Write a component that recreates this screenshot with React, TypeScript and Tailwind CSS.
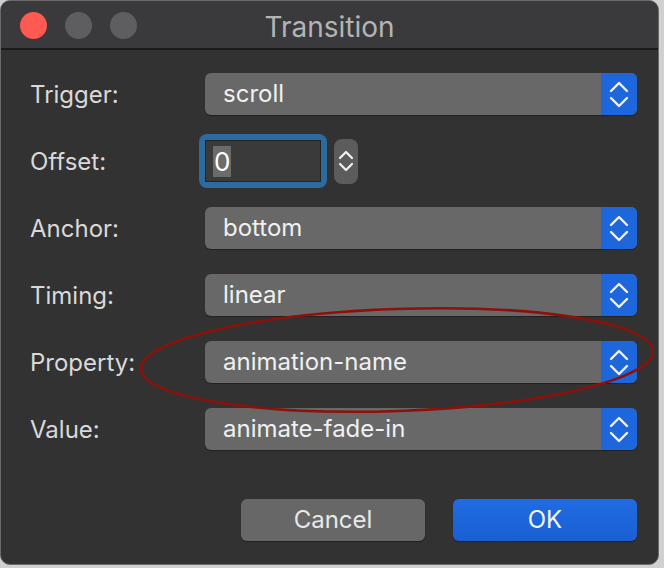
import React from "react";

const font = { fontFamily: 'Inter, "Noto Sans", sans-serif' };

const rows = [
  { label: "Trigger:", value: "scroll" },
  { label: "Offset:", value: "0", kind: "number" },
  { label: "Anchor:", value: "bottom" },
  { label: "Timing:", value: "linear" },
  { label: "Property:", value: "animation-name" },
  { label: "Value:", value: "animate-fade-in" },
];

function Chevrons({ w = 16, gap = 7, stroke = 2.4 }: { w?: number; gap?: number; stroke?: number }) {
  const h = w / 2;
  return (
    <svg width={w + 4} height={h * 2 + gap + 4} viewBox={`-2 -2 ${w + 4} ${h * 2 + gap + 4}`} fill="none">
      <path d={`M0 ${h} L${w / 2} 0 L${w} ${h}`} stroke="#f2f2f2" strokeWidth={stroke} strokeLinecap="round" strokeLinejoin="round" />
      <path d={`M0 ${h + gap} L${w / 2} ${h * 2 + gap} L${w} ${h + gap}`} stroke="#f2f2f2" strokeWidth={stroke} strokeLinecap="round" strokeLinejoin="round" />
    </svg>
  );
}

function PopUp({ value }: { value: string }) {
  return (
    <div className="flex h-[42px] w-[432px] overflow-hidden rounded-[6px] bg-[#686868] shadow-[0_1px_1px_rgba(0,0,0,0.35)]">
      <div className="flex flex-1 items-center pl-[18px] text-[24px] text-[#f0f0f0]">{value}</div>
      <div className="flex w-[36px] items-center justify-center bg-[#1d66dc]">
        <Chevrons />
      </div>
    </div>
  );
}

function NumberField({ value }: { value: string }) {
  return (
    <div className="flex h-[42px] items-center gap-[4px]">
      <div className="-ml-[6px] rounded-[8px] bg-[#2c6a9f] p-[6px]">
        <div className="flex h-[42px] w-[116px] items-center border border-[#242424] bg-[#3a3a3a] pl-[7px]">
          <span className="bg-[#6b6b6b] px-[1px] text-[26px] leading-[31px] text-white">{value}</span>
        </div>
      </div>
      <div className="ml-[3px] flex h-[45px] w-[24px] items-center justify-center rounded-[8px] bg-[#5c5c5c]">
        <Chevrons w={12} gap={6} stroke={2.2} />
      </div>
    </div>
  );
}

export default function App() {
  return (
    <div className="h-[568px] w-[664px] bg-[#d0d0d0]" style={font}>
      <div className="relative h-[565px] w-[659px] overflow-hidden rounded-[10px] border border-[#6a6a6a] bg-[#323232]">
        {/* title bar */}
        <div className="relative flex h-[49px] items-center border-b-2 border-[#1b1b1b] bg-[#3a3a3c]">
          <div className="flex gap-[18px] pl-[19px] pt-[1px]">
            <span className="h-[27px] w-[27px] rounded-full bg-[#fe5a52]" />
            <span className="h-[27px] w-[27px] rounded-full bg-[#5e5e60]" />
            <span className="h-[27px] w-[27px] rounded-full bg-[#5e5e60]" />
          </div>
          <div className="absolute inset-0 flex items-center justify-center pt-[4px] text-[28px] text-[#b4b4b4]">Transition</div>
        </div>

        <div className="grid auto-rows-[42px] grid-cols-[175px_432px] gap-y-[25px] pl-[29px] pt-[23px]">
          {rows.map((r) => (
            <React.Fragment key={r.label}>
              <div className="flex h-[42px] items-center pt-[2px] text-[24px] text-[#d9d9d9]">{r.label}</div>
              {r.kind === "number" ? <NumberField value={r.value} /> : <PopUp value={r.value} />}
            </React.Fragment>
          ))}
        </div>

        <div className="flex justify-end gap-[28px] pr-[21px] pt-[49px]">
          <button className="h-[42px] w-[184px] rounded-[6px] bg-[#676767] text-[24px] text-[#e8e8e8] shadow-[0_1px_1px_rgba(0,0,0,0.35)]">
            Cancel
          </button>
          <button className="h-[42px] w-[184px] rounded-[6px] bg-gradient-to-b from-[#1f6ce2] to-[#1a5fd2] text-[24px] text-[#f4f4f4] shadow-[0_1px_1px_rgba(0,0,0,0.35)]">
            OK
          </button>
        </div>

        {/* hand-drawn annotation over the Property row */}
        <svg className="pointer-events-none absolute left-0 top-0" width="659" height="565">
          <ellipse cx="396" cy="359" rx="256" ry="51" fill="none" stroke="#8c110b" strokeWidth="2.6" transform="rotate(-2 396 359)" />
        </svg>
      </div>
    </div>
  );
}
